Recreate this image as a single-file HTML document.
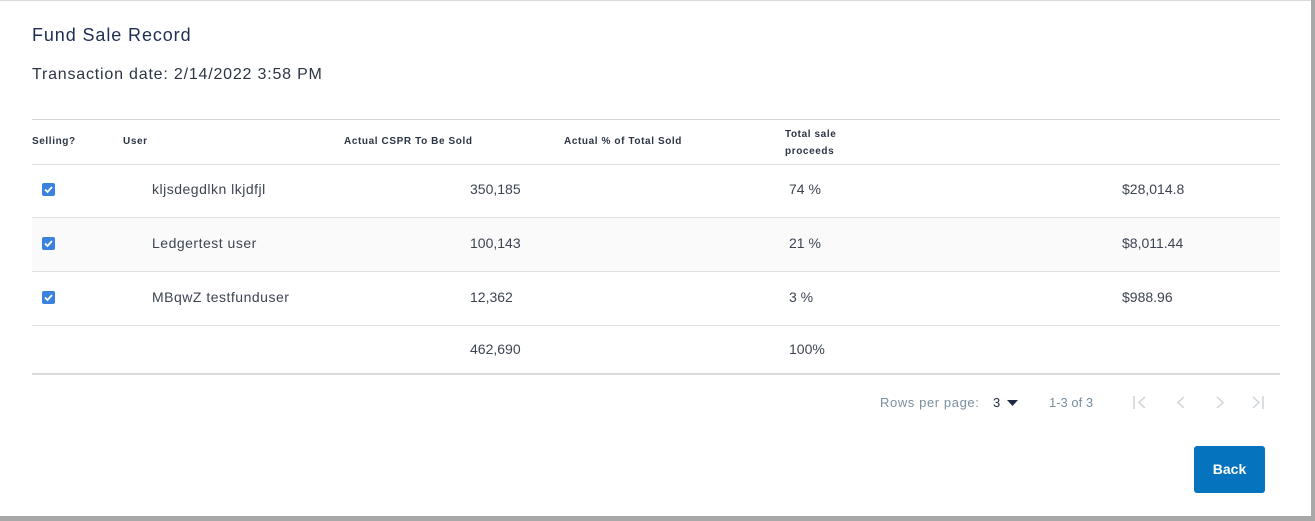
<!DOCTYPE html>
<html><head><style>
body{margin:0;width:1315px;height:521px;background:#a8a8a8;font-family:"Liberation Sans",sans-serif;position:relative;overflow:hidden}
.dlg{position:absolute;left:0;top:0;width:1311px;height:516px;background:#fff;border-top:1px solid #d6dbe0;box-sizing:border-box}
.t{position:absolute;white-space:nowrap}
.line{position:absolute;left:32px;width:1248px;height:1px;background:#e0e0e0}
.h{font-size:10px;font-weight:bold;color:#2c3545;letter-spacing:0.6px}
.c{font-size:14px;color:#3d4452}
.u{letter-spacing:0.5px}
.cb{position:absolute;left:42px;width:13px;height:13px;background:#3b82e0;border-radius:2px}
.cb svg{position:absolute;left:1px;top:1px}
</style></head><body>
<div class="dlg">
<div class="t" style="left:32px;top:24px;font-size:18px;letter-spacing:0.9px;color:#1e2f52">Fund Sale Record</div>
<div class="t" style="left:32px;top:65px;font-size:16px;letter-spacing:0.8px;color:#2c3545">Transaction date: 2/14/2022 3:58 PM</div>
<div class="line" style="top:118px;background:#d0d5da"></div>
<div class="t h" style="left:32px;top:135px">Selling?</div>
<div class="t h" style="left:123px;top:135px">User</div>
<div class="t h" style="left:344px;top:135px">Actual CSPR To Be Sold</div>
<div class="t h" style="left:564px;top:135px">Actual % of Total Sold</div>
<div class="t h" style="left:785px;top:125px;line-height:17px">Total sale<br>proceeds</div>
<div class="line" style="top:163px"></div>
<div style="position:absolute;left:32px;top:216px;width:1248px;height:54px;background:#fafafa"></div>
<div class="line" style="top:216px"></div>
<div class="line" style="top:270px"></div>
<div class="line" style="top:324px"></div>
<div class="line" style="top:372px;height:2px;background:#d8dbde"></div>

<div class="cb" style="top:182px"><svg width="11" height="11"><path d="M2 5.5l2.5 2.5L9 3" stroke="#fff" stroke-width="1.8" fill="none"/></svg></div>
<div class="t c u" style="left:152px;top:180px">kljsdegdlkn lkjdfjl</div>
<div class="t c" style="left:470px;top:180px">350,185</div>
<div class="t c" style="left:789px;top:180px">74 %</div>
<div class="t c" style="left:1122px;top:180px">$28,014.8</div>

<div class="cb" style="top:236px"><svg width="11" height="11"><path d="M2 5.5l2.5 2.5L9 3" stroke="#fff" stroke-width="1.8" fill="none"/></svg></div>
<div class="t c u" style="left:152px;top:234px">Ledgertest user</div>
<div class="t c" style="left:470px;top:234px">100,143</div>
<div class="t c" style="left:789px;top:234px">21 %</div>
<div class="t c" style="left:1122px;top:234px">$8,011.44</div>

<div class="cb" style="top:290px"><svg width="11" height="11"><path d="M2 5.5l2.5 2.5L9 3" stroke="#fff" stroke-width="1.8" fill="none"/></svg></div>
<div class="t c u" style="left:152px;top:288px">MBqwZ testfunduser</div>
<div class="t c" style="left:470px;top:288px">12,362</div>
<div class="t c" style="left:789px;top:288px">3 %</div>
<div class="t c" style="left:1122px;top:288px">$988.96</div>

<div class="t c" style="left:470px;top:340px">462,690</div>
<div class="t c" style="left:789px;top:340px">100%</div>

<div class="t" style="left:880px;top:394px;font-size:13px;letter-spacing:0.6px;color:#7a8fa0">Rows per page:</div>
<div class="t" style="left:993px;top:394px;font-size:13px;color:#1e2a40">3</div>
<svg style="position:absolute;left:1007px;top:399px" width="11" height="6"><path d="M0 0h11L5.5 6z" fill="#1e2a40"/></svg>
<div class="t" style="left:1049px;top:394px;font-size:13px;color:#7a8fa0">1-3 of 3</div>
<svg style="position:absolute;left:1130px;top:393px" width="140" height="18" fill="none" stroke="#cfd3d7" stroke-width="1.5">
<path d="M4 2v13M15 3l-6 5.5 6 5.5"/>
<path d="M54 3l-6 5.5 6 5.5"/>
<path d="M87 3l6 5.5-6 5.5"/>
<path d="M123 3l6 5.5-6 5.5M133 2v13"/>
</svg>
<div class="t" style="left:1194px;top:445px;width:71px;height:47px;background:#0573be;border-radius:3px;color:#fff;font-size:14px;font-weight:bold;text-align:center;line-height:47px">Back</div>
</div>
</body></html>
